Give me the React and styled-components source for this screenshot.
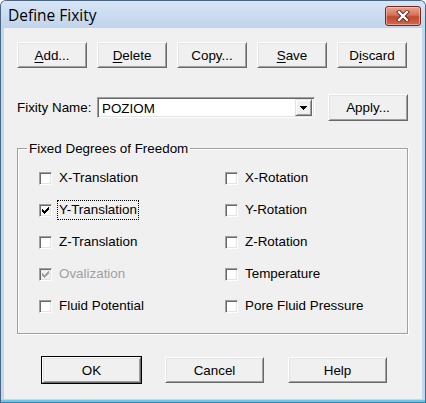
import React from "react";
import styled, { createGlobalStyle } from "styled-components";

const GlobalStyle = createGlobalStyle`
  html, body {
    margin: 0;
    padding: 0;
    background: #ffffff;
  }
  body {
    font-family: "Liberation Sans", Arial, sans-serif;
    font-size: 13.4px;
    color: #000;
  }
`;

const Window = styled.div`
  width: 426px;
  height: 403px;
  box-sizing: border-box;
  display: flex;
  flex-direction: column;
  border: 1px solid #4d6585;
  border-bottom-color: #2f86b3;
  border-radius: 6px 6px 0 0;
  background: #c3d7ee;
  padding: 0 3px 3px;
  box-shadow: inset 0 -2px 0 #79c3e2;
`;

const TitleBar = styled.div`
  height: 27px;
  display: flex;
  align-items: center;
  justify-content: space-between;
  background: linear-gradient(#d7e5f5, #c0d4ec);
  margin: 0 -3px;
  padding: 0 4px 0 7px;
  border-radius: 5px 5px 0 0;
`;

const Title = styled.span`
  font-family: "Open Sans", "Noto Sans", sans-serif;
  font-size: 15.5px;
  color: #000;
  padding-top: 1px;
`;

const CloseButton = styled.div`
  width: 36px;
  height: 20px;
  box-sizing: border-box;
  margin-top: 2px;
  border: 1px solid #6f2a20;
  border-radius: 3px;
  background: linear-gradient(#e8a593 0%, #d6705a 45%, #c04a30 55%, #d2694d 100%);
  box-shadow: inset 0 0 0 1px rgba(255, 210, 200, 0.55);
  display: flex;
  align-items: center;
  justify-content: center;
`;

const Content = styled.div`
  flex: 1;
  background: #f0f0f0;
  display: flex;
  flex-direction: column;
  padding: 14px 14px 0 13px;
`;

const ButtonRow = styled.div`
  display: flex;
  gap: ${(p) => p.$gap}px;
  padding-left: ${(p) => p.$indent || 0}px;
`;

const Button = styled.div`
  width: ${(p) => p.$width}px;
  height: ${(p) => p.$height || 26}px;
  box-sizing: border-box;
  display: flex;
  align-items: center;
  justify-content: center;
  background: #f0f0f0;
  border: 1px solid;
  border-color: #ffffff #696969 #696969 #ffffff;
  box-shadow: ${(p) =>
    p.$default
      ? "inset 1px 1px 0 #e3e3e3, inset -1px -1px 0 #a0a0a0, 0 0 0 1px #000"
      : "inset 1px 1px 0 #e3e3e3, inset -1px -1px 0 #a0a0a0"};
  color: #000;
  u {
    text-decoration: underline;
    text-underline-offset: 2px;
  }
`;

const NameRow = styled.div`
  display: flex;
  align-items: center;
  margin-top: 26px;
  height: 27px;
`;

const FieldLabel = styled.span`
  width: 80px;
`;

const Combo = styled.div`
  width: 218px;
  height: 21px;
  box-sizing: border-box;
  display: flex;
  align-items: center;
  justify-content: space-between;
  background: #fff;
  border: 1px solid;
  border-color: #a0a0a0 #fff #fff #a0a0a0;
  box-shadow: inset 1px 1px 0 #696969, inset -1px -1px 0 #e3e3e3;
  padding: 2px 2px 2px 4px;
`;

const ComboText = styled.span`
  padding-top: 1px;
`;

const DropButton = styled.div`
  width: 17px;
  height: 17px;
  box-sizing: border-box;
  background: #f0f0f0;
  border: 1px solid;
  border-color: #e3e3e3 #696969 #696969 #e3e3e3;
  box-shadow: inset 1px 1px 0 #fff, inset -1px -1px 0 #a0a0a0;
  display: flex;
  align-items: center;
  justify-content: center;
`;

const ApplySlot = styled.div`
  margin-left: 13px;
`;

const Group = styled.fieldset`
  margin: 20px 0 0 0;
  padding: 6px 0 11px 21px;
  min-width: 0;
  border: 1px solid #a0a0a0;
  box-shadow: inset 1px 1px 0 #fff, 1px 1px 0 #fff;
  display: grid;
  grid-template-columns: 186px 1fr;
  grid-auto-rows: 32px;
`;

const Legend = styled.legend`
  margin-left: -12px;
  padding: 0 2px;
  line-height: 15px;
`;

const Option = styled.label`
  display: flex;
  align-items: center;
  gap: 6px;
  color: ${(p) => (p.$disabled ? "#a0a0a0" : "#000")};
`;

const Box = styled.span`
  width: 13px;
  height: 13px;
  box-sizing: border-box;
  flex: none;
  display: flex;
  align-items: center;
  justify-content: center;
  background: ${(p) => (p.$disabled ? "#f0f0f0" : "#fff")};
  border: 1px solid;
  border-color: #a0a0a0 #fff #fff #a0a0a0;
  box-shadow: inset 1px 1px 0 #696969, inset -1px -1px 0 #e3e3e3;
`;

const OptionText = styled.span`
  padding: 1px 1px 2px;
  outline: ${(p) => (p.$focus ? "1px dotted #000" : "none")};
  line-height: 15px;
`;

const BottomRow = styled(ButtonRow)`
  margin-top: 23px;
`;

function Check({ color }) {
  const cols = [2, 3, 4, 3, 2, 1, 0];
  return (
    <svg width="7" height="7" viewBox="0 0 7 7" shapeRendering="crispEdges">
      {cols.map((y, x) => (
        <rect key={x} x={x} y={y} width="1" height="3" fill={color} />
      ))}
    </svg>
  );
}

function CheckOption({ label, checked, disabled, focus }) {
  return (
    <Option $disabled={disabled}>
      <Box $disabled={disabled}>
        {checked && <Check color={disabled ? "#a0a0a0" : "#000"} />}
      </Box>
      <OptionText $focus={focus}>{label}</OptionText>
    </Option>
  );
}

const options = [
  { label: "X-Translation" },
  { label: "X-Rotation" },
  { label: "Y-Translation", checked: true, focus: true },
  { label: "Y-Rotation" },
  { label: "Z-Translation" },
  { label: "Z-Rotation" },
  { label: "Ovalization", checked: true, disabled: true },
  { label: "Temperature" },
  { label: "Fluid Potential" },
  { label: "Pore Fluid Pressure" },
];

export default function App() {
  return (
    <>
      <GlobalStyle />
      <Window>
        <TitleBar>
          <Title>Define Fixity</Title>
          <CloseButton>
            <svg width="14" height="12" viewBox="0 0 14 12">
              <path
                d="M3 2 L11 10 M11 2 L3 10"
                stroke="#5a1d14"
                strokeWidth="4"
                strokeLinecap="square"
              />
              <path
                d="M3 2 L11 10 M11 2 L3 10"
                stroke="#fff"
                strokeWidth="2.4"
                strokeLinecap="square"
              />
            </svg>
          </CloseButton>
        </TitleBar>
        <Content>
          <ButtonRow $gap={10}>
            <Button $width={70}>
              <span><u>A</u>dd...</span>
            </Button>
            <Button $width={70}>
              <span><u>D</u>elete</span>
            </Button>
            <Button $width={70}>Copy...</Button>
            <Button $width={70}>
              <span><u>S</u>ave</span>
            </Button>
            <Button $width={70}>
              <span>D<u>i</u>scard</span>
            </Button>
          </ButtonRow>

          <NameRow>
            <FieldLabel>Fixity Name:</FieldLabel>
            <Combo>
              <ComboText>POZIOM</ComboText>
              <DropButton>
                <svg width="7" height="4" viewBox="0 0 7 4" shapeRendering="crispEdges">
                  <path d="M0 0 H7 L3.5 4 Z" fill="#000" />
                </svg>
              </DropButton>
            </Combo>
            <ApplySlot>
              <Button $width={80} $height={27}>Apply...</Button>
            </ApplySlot>
          </NameRow>

          <Group>
            <Legend>Fixed Degrees of Freedom</Legend>
            {options.map((o) => (
              <CheckOption key={o.label} {...o} />
            ))}
          </Group>

          <BottomRow $gap={24} $indent={25}>
            <Button $width={99} $default>OK</Button>
            <Button $width={99}>Cancel</Button>
            <Button $width={99}>Help</Button>
          </BottomRow>
        </Content>
      </Window>
    </>
  );
}
